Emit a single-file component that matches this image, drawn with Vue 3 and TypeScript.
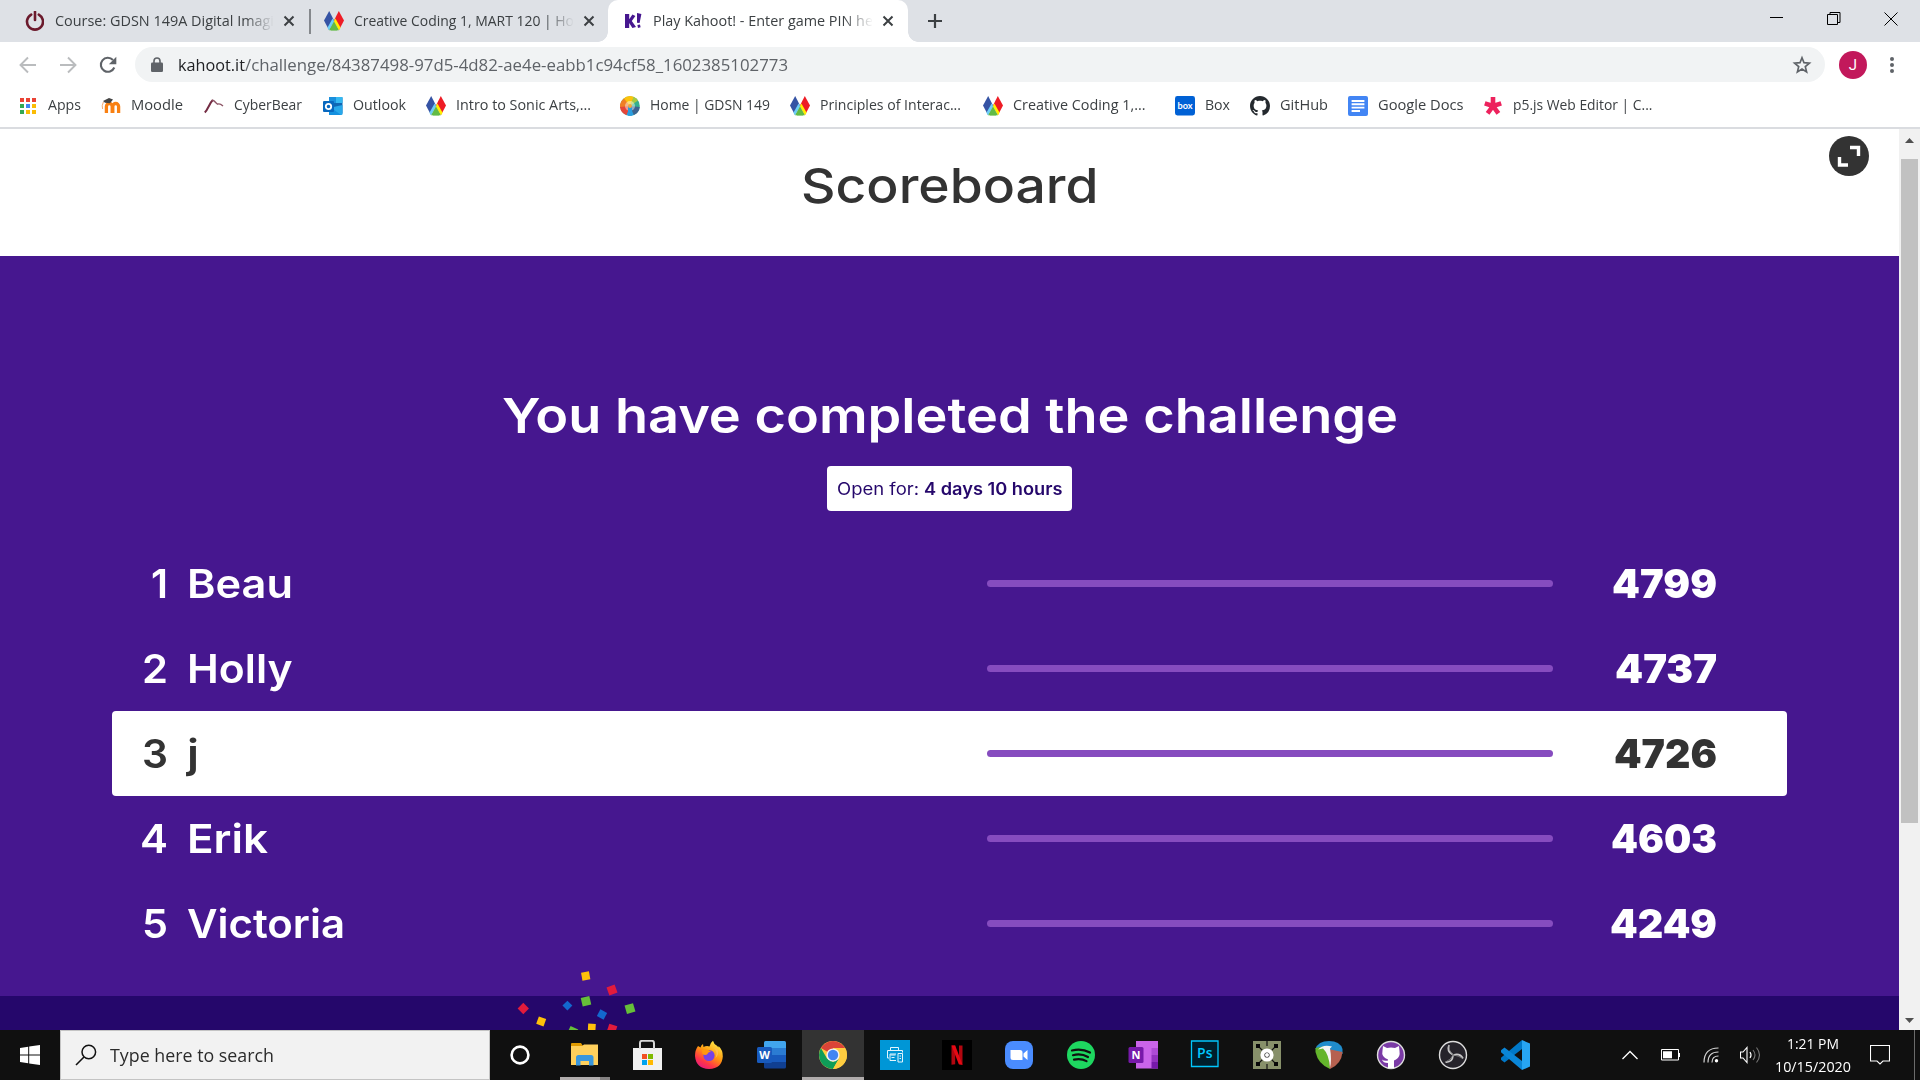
<script setup lang="ts">
import type { DirectiveBinding } from 'vue'

interface Tab { title: string; icon: string; width: number; active?: boolean }
interface Bookmark { label: string; icon: string; slot: number; text: number }
interface Player { rank: number; name: string; score: number; nameWidth: number; rankWidth: number; scoreWidth: number; me?: boolean }
interface Piece { x: number; y: number; s: number; r: number; c: string }
interface App { name: string; icon: string; state?: string }

// Scales a label horizontally so that it occupies the given width.
const vFit = (el: HTMLElement, binding: DirectiveBinding<number>) => {
  el.style.transform = ''
  el.style.marginRight = ''
  const natural = el.getBoundingClientRect().width
  el.style.transform = `scaleX(${binding.value / natural})`
  el.style.marginRight = `${binding.value - natural}px`
}

const octocat = 'M8 0C3.58 0 0 3.58 0 8c0 3.54 2.29 6.53 5.47 7.59.4.07.55-.17.55-.38 0-.19-.01-.82-.01-1.49-2.01.37-2.53-.49-2.69-.94-.09-.23-.48-.94-.82-1.13-.28-.15-.68-.52-.01-.53.63-.01 1.08.58 1.23.82.72 1.21 1.87.87 2.33.66.07-.52.28-.87.51-1.07-1.78-.2-3.64-.89-3.64-3.95 0-.87.31-1.59.82-2.15-.08-.2-.36-1.02.08-2.12 0 0 .67-.21 2.2.82.64-.18 1.32-.27 2-.27.68 0 1.36.09 2 .27 1.53-1.04 2.2-.82 2.2-.82.44 1.1.16 1.92.08 2.12.51.56.82 1.27.82 2.15 0 3.07-1.87 3.75-3.65 3.95.29.25.54.73.54 1.48 0 1.07-.01 1.93-.01 2.2 0 .21.15.46.55.38A8.013 8.013 0 0016 8c0-4.42-3.58-8-8-8z'

// 20x20 glyphs used in the tab strip and the bookmarks bar
const small: Record<string, string> = {
  power: '<path d="M7.2 3.6A8 8 0 1 0 14.8 3.6" fill="none" stroke="#6b1a2c" stroke-width="2.600" stroke-linecap="round"/><path d="M11 .8V9" stroke="#6b1a2c" stroke-width="2.600" stroke-linecap="round"/>',
  diamonds: '<path d="M5.2 0L10 9.6 5 19 0 9.6z" fill="#3553a4"/><path d="M14.8 0L20 9.6 15 19 10 9.6z" fill="#ee1c25"/><path d="M10 10l5 9.3H5z" fill="#62bb46"/><path d="M10 10L5 19.3l-1.6-2.6L8.6 7.4z" fill="#6ccff6"/><path d="M10 10l5 9.3 1.6-2.6-5.2-9.3z" fill="#fff200"/><path d="M10 13l3.4 6.5H6.6z" fill="#62bb46"/>',
  kahoot: '<path d="M1 3h4.2v5.2L8.400 3.6l3 1.4-3.600 5L12 16l-3.600 1-3.200-5v5H1z" fill="#46178f"/><path d="M13 2l4.400 1-1.800 9-2.600-.2zM13.400 14l2.600-.4.6 2.600-2.600.8z" fill="#46178f"/>',
  apps: '<path d="M2 2h4v4H2zM8 2h4v4H8zM14 2h4v4h-4z" fill="#ea4335"/><path d="M2 8h4v4H2z" fill="#34a853"/><path d="M8 8h4v4H8z" fill="#4285f4"/><path d="M14 8h4v4h-4z" fill="#fbbc04"/><path d="M2 14h4v4H2z" fill="#34a853"/><path d="M8 14h4v4H8zM14 14h4v4h-4z" fill="#fbbc04"/>',
  moodle: '<path d="M5.4 17V10.4a2.9 2.9 0 0 1 5.8 0V17M11.8 17V10.4a2.9 2.9 0 0 1 5.8 0V17" fill="none" stroke="#f98012" stroke-width="3.3"/><path d="M2 5l6-3 4 1.6-3 3.6-5-.4z" fill="#444"/><path d="M2.4 6q-2 4-.8 7" fill="none" stroke="#f0a873" stroke-width="1"/>',
  bear: '<path d="M.8 16.500C4 13.500 5.600 7 8.800 4" fill="none" stroke="#742c43" stroke-width="2"/><path d="M8.200 4.200c2.200-.4 3.400 3 5.400 4 1.400-.8 3.400 0 5.400 1.800" fill="none" stroke="#8d5566" stroke-width="1.400"/>',
  outlook: '<rect x="6" y="1" width="13.5" height="17" rx="1" fill="#0f67b4"/><path d="M6 1h7v6H6z" fill="#1a8fdc"/><path d="M13 1h6.5v6H13z" fill="#35b8f1"/><path d="M6 12l13.5-3v9a1 1 0 0 1-1 1H6z" fill="#28a8ea"/><path d="M6 10l12 9H6z" fill="#1490df"/><rect y="5" width="11" height="11" rx="1" fill="#0868bf"/><circle cx="5.5" cy="10.5" r="2.7" fill="none" stroke="#fff" stroke-width="1.8"/>',
  wheel: '<circle cx="10" cy="10" r="9.8" fill="#35b08e"/><path d="M10 10L3 3.2A9.8 9.8 0 0 1 14 1z" fill="#fdc30b"/><path d="M10 10L0 12A9.8 9.8 0 0 1 4 2.4z" fill="#f07e26"/><path d="M10 10L7 19.3A9.8 9.8 0 0 1 0 11z" fill="#e5463a"/><path d="M10 10l4 9a9.8 9.8 0 0 1-7.4 0z" fill="#2a9de0"/><path d="M10 10l9.8 1a9.8 9.8 0 0 1-6 8z" fill="#3d6390"/><path d="M10 10l3.6-9.2a9.8 9.8 0 0 1 4.4 3.6z" fill="#a7c942"/><circle cx="10" cy="10" r="5" fill="#fff" opacity=".45"/><path d="M8 10h4v9.400q-2 .6-4 0z" fill="#2a9de0"/><circle cx="10" cy="10" r="2" fill="#f3a83b"/>',
  box: '<rect width="20" height="19.4" rx="2.4" fill="#0061d5"/><text x="10" y="13" text-anchor="middle" font-family="Lato, sans-serif" font-weight="700" font-size="9.5" textLength="15" lengthAdjust="spacingAndGlyphs" fill="#fff">box</text>',
  github: `<path transform="scale(1.25)" fill="#24292e" d="${octocat}"/>`,
  docs: '<rect width="20" height="20" rx="2" fill="#4285f4"/><path d="M3.6 5h12.8M3.6 8.3h12.8M3.6 11.6h12.8M3.6 15h8.4" stroke="#fff" stroke-width="1.9"/>',
  star5: '<path d="M10 10V1M10 10l8.2-2.6M10 10l5.4 7.4M10 10l-5.4 7.4M10 10L1.8 7.4" stroke="#ed225d" stroke-width="4.6"/>',
}

// 30x30 glyphs used in the taskbar
const large: Record<string, string> = {
  cortana: '<circle cx="15" cy="15" r="8.4" fill="none" stroke="#fff" stroke-width="2.6"/>',
  explorer: '<path d="M1 4q0-1 1-1h9l2 3H1z" fill="#e09a00"/><path d="M1 6h11l2-1.500h14V25H1z" fill="#ffd05c"/><path d="M6 25.500V17.500Q6 15 8.500 15h12.500Q23.500 15 23.500 17.500v8h-4.500V21h-8.500v4.500z" fill="#3a97dd"/>',
  store: '<path d="M1 8h29v22H1z" fill="#f1f1f1"/><path d="M8 9V3q0-2.200 2.200-2.200h9.600q2.200 0 2.200 2.200v6" fill="none" stroke="#d8d8d8" stroke-width="2"/><path d="M10 14h5v5h-5z" fill="#f25022"/><path d="M16 14h5v5h-5z" fill="#7fba00"/><path d="M10 20h5v5h-5z" fill="#00a4ef"/><path d="M16 20h5v5h-5z" fill="#ffb900"/>',
  firefox: '<defs><linearGradient id="ff" x1=".8" y1="0" x2=".2" y2="1"><stop offset="0" stop-color="#fff44f"/><stop offset=".45" stop-color="#ff980e"/><stop offset=".75" stop-color="#ff3647"/><stop offset="1" stop-color="#e31587"/></linearGradient></defs><path d="M4 6l2.500 1.500Q7 5 9 4l.5 3q3-1.500 6-.5Q17 2 19 .8q.8 3.500 4 5l1.500 1.700V6Q29 10 28.800 16.500 28 28.500 15 29 2 28.500 1 16 1 10 4 6z" fill="url(#ff)"/><circle cx="15" cy="15.500" r="5.600" fill="#7542e5"/><path d="M8 10q4-2 9 1.500-3 .5-4 3-2 1-4.500-.5z" fill="#ff980e"/><path d="M20 8q4 4 1.500 10 4-4 2-9z" fill="#ffbd4f"/>',
  word: '<path d="M8 2.500q0-1.500 1.500-1.500H28.500Q30 1 30 2.500V8H8z" fill="#41a5ee"/><path d="M8 8h22v7H8z" fill="#2b7cd3"/><path d="M8 15h22v7H8z" fill="#185abd"/><path d="M8 22h22v5q0 1.500-1.500 1.500H9.500Q8 28.500 8 27z" fill="#103f91"/><rect x="1" y="7" width="15" height="16" rx="1.500" fill="#185abd"/><text x="8.500" y="19" text-anchor="middle" font-family="Open Sans, sans-serif" font-weight="700" font-size="11" fill="#fff">W</text>',
  chrome: '<circle cx="15" cy="15" r="14" fill="#ffcd40"/><path d="M15 15L2.900 8A14 14 0 0 1 27.100 8H15z" fill="#db4437"/><path d="M2.900 8A14 14 0 0 0 15 29l6-10.500L15 22 9 18.500z" fill="#0f9d58"/><path d="M15 8h12.100A14 14 0 0 1 15 29l6-10.500z" fill="#ffcd40"/><circle cx="15" cy="15" r="6.600" fill="#f1f1f1"/><circle cx="15" cy="15" r="5.200" fill="#4285f4"/>',
  printer: '<path d="M0 0h30v30H0z" fill="#0096d6"/><path d="M9 18H7.500v-7.500h15v2M10.500 10V7.500h8V10M10.500 15h5M16 14h-6v6.500h6M18 13.500h4.500v8.500H18zM19.500 16h1.500M19.500 18.500h1.500M11.500 17.500h3" fill="none" stroke="#e4f5fc" stroke-width="1"/>',
  netflix: '<path d="M0 0h30v30H0z" fill="#000"/><path d="M9.500 5.500h3.700v18.800l-3.700.4zM17 5.500h3.500v19.200l-3.500-.4z" fill="#b1060f"/><path d="M9.500 5.500h3.700l7.300 19.200-3.700-.4z" fill="#e50914"/>',
  zoom: '<rect x="1" y="1" width="28" height="28" rx="8" fill="#4a8cff"/><path d="M6.500 10h9.500q2.500 0 2.500 2.500V20H9q-2.500 0-2.500-2.500zM19.500 13.500l4-3.500v10l-4-3.500z" fill="#fff"/>',
  spotify: '<circle cx="15" cy="15" r="14" fill="#1ed760"/><path d="M6 10.500q9.500-2.500 18 2M7 15.200q8-2.200 15 1.800M8 19.600q7-1.600 12.500 1.500" fill="none" stroke="#101010" stroke-width="2.200" stroke-linecap="round"/>',
  onenote: '<path d="M8 1h22v27.500H8z" fill="#ca64ea"/><path d="M23.500 8H30v7h-6.500z" fill="#ae4bd5"/><path d="M23.500 15H30v7h-6.500z" fill="#9332bf"/><path d="M23.500 22H30v6.500h-6.500z" fill="#7719aa"/><rect x=".5" y="7" width="15" height="16" rx="1.500" fill="#7719aa"/><text x="8" y="19" text-anchor="middle" font-family="Open Sans, sans-serif" font-weight="700" font-size="11" fill="#fff">N</text>',
  photoshop: '<path d="M1.500 1h26.500v25.500H1.500z" fill="#001e2b" stroke="#00c8ff" stroke-width="1.300"/><text x="14.800" y="18" text-anchor="middle" font-family="Open Sans, sans-serif" font-weight="600" font-size="14" fill="#00c8ff">Ps</text>',
  processor: '<path d="M1 1h28v28H1z" fill="#87906a"/><path d="M5.500 5.500l19 19M24.500 5.500l-19 19M15 1v5M15 24v5" stroke="#151515" stroke-width="1.200"/><path d="M4 4h4v4H4zM22 4h4v4h-4zM4 22h4v4H4zM22 22h4v4h-4z" fill="#080808"/><circle cx="15" cy="15" r="4.600" fill="#222" stroke="#fff" stroke-width="4"/><circle cx="15" cy="15" r="2" fill="#fff"/>',
  reaper: '<path d="M1.500 9Q4 1 15 1t13.500 8v5H15z" fill="#208ccc"/><path d="M1.500 8l7.500-1.500q5 1.500 7 8.500v14Q4 24 1.500 12z" fill="#64b52c"/><path d="M14 9l14.500 3q-1 12-12.500 17z" fill="#b66150"/><path d="M4 9.500q5-5.500 14-3l-2 2q2 11 0 19.500-1-14-7-19.500z" fill="#f4f4f4"/>',
  desktop: '<circle cx="15" cy="15" r="13.500" fill="#7a3aa5" stroke="#ddd" stroke-width="1.400"/><path d="M7 6l4 2q4-1 8 0l4-2 .5 5q1 6-3.500 8.500l-2 1v7.500h-6v-5q-5 0-6-3.500 2 2 6 1v-1q-7-2.500-5.500-9z" fill="#fff"/>',
  obs: '<circle cx="15" cy="15" r="13.500" fill="#25232a" stroke="#ddd" stroke-width="1.400"/><path d="M11 5q-2.500 6.500 3.500 9.500M25 18.500Q22 13 15.500 15M7.500 22q7 .5 7.500-6.500" fill="none" stroke="#c8c8c8" stroke-width="1.700"/><path d="M11 5q-1 5 3.500 9.500M25 18.500q-5-3-9.500-3.500M7.500 22q5-2 7.500-6.500" fill="none" stroke="#8b8b8b" stroke-width=".8"/>',
  vscode: '<path d="M22 0v9L4.500 22.500 1 19.800v-2z" fill="#0078c8"/><path d="M22 30v-9L4.500 7.500 1 10.200v2z" fill="#0a86d8"/><path d="M22 0l8 3.500v23L22 30z" fill="#27a5f3"/>',
}

const tabs: Tab[] = [
  { title: 'Course: GDSN 149A Digital Imagi', icon: 'power', width: 219 },
  { title: 'Creative Coding 1, MART 120 | Ho', icon: 'diamonds', width: 220 },
  { title: 'Play Kahoot! - Enter game PIN he', icon: 'kahoot', width: 220, active: true },
]

const bookmarks: Bookmark[] = [
  { label: 'Apps', icon: 'apps', slot: 83, text: 33 },
  { label: 'Moodle', icon: 'moodle', slot: 103, text: 52 },
  { label: 'CyberBear', icon: 'bear', slot: 119, text: 68 },
  { label: 'Outlook', icon: 'outlook', slot: 103, text: 53 },
  { label: 'Intro to Sonic Arts,...', icon: 'diamonds', slot: 193.5, text: 135 },
  { label: 'Home | GDSN 149', icon: 'wheel', slot: 170.5, text: 120 },
  { label: 'Principles of Interac...', icon: 'diamonds', slot: 193, text: 141 },
  { label: 'Creative Coding 1,...', icon: 'diamonds', slot: 192, text: 132.5 },
  { label: 'Box', icon: 'box', slot: 75, text: 25 },
  { label: 'GitHub', icon: 'github', slot: 98, text: 48 },
  { label: 'Google Docs', icon: 'docs', slot: 135, text: 85.5 },
  { label: 'p5.js Web Editor | C...', icon: 'star5', slot: 175, text: 139.5 },
]

const players: Player[] = [
  { rank: 1, name: 'Beau', score: 4799, nameWidth: 106, rankWidth: 17, scoreWidth: 105 },
  { rank: 2, name: 'Holly', score: 4737, nameWidth: 105.5, rankWidth: 26, scoreWidth: 102 },
  { rank: 3, name: 'j', score: 4726, nameWidth: 12, rankWidth: 26, scoreWidth: 103, me: true },
  { rank: 4, name: 'Erik', score: 4603, nameWidth: 81, rankWidth: 28, scoreWidth: 106 },
  { rank: 5, name: 'Victoria', score: 4249, nameWidth: 158, rankWidth: 26, scoreWidth: 107 },
]

const confetti: Piece[] = [
  { x: 585.7, y: 976, s: 8, r: -10, c: '#ffc00a' },
  { x: 612, y: 990, s: 8.6, r: -20, c: '#e21b3c' },
  { x: 523.3, y: 1008.5, s: 8, r: 45, c: '#e21b3c' },
  { x: 567.4, y: 1005.6, s: 7, r: 45, c: '#1368ce' },
  { x: 586, y: 1001.2, s: 8.8, r: -13, c: '#66bf39' },
  { x: 630, y: 1008.6, s: 8.8, r: -16, c: '#66bf39' },
  { x: 602, y: 1014.5, s: 7.6, r: 28, c: '#1368ce' },
  { x: 541.2, y: 1021.4, s: 7.8, r: 20, c: '#ffc00a' },
  { x: 591.8, y: 1027.6, s: 7.6, r: 3, c: '#ffc00a' },
  { x: 612, y: 1029, s: 8.4, r: 18, c: '#e21b3c' },
  { x: 572.6, y: 1031.6, s: 8.4, r: 25, c: '#66bf39' },
]

const apps: App[] = [
  { name: 'Cortana', icon: 'cortana', state: 'cortana' },
  { name: 'File Explorer', icon: 'explorer', state: 'running' },
  { name: 'Microsoft Store', icon: 'store' },
  { name: 'Firefox', icon: 'firefox' },
  { name: 'Word', icon: 'word' },
  { name: 'Chrome', icon: 'chrome', state: 'focused' },
  { name: 'Printer', icon: 'printer' },
  { name: 'Netflix', icon: 'netflix' },
  { name: 'Zoom', icon: 'zoom' },
  { name: 'Spotify', icon: 'spotify' },
  { name: 'OneNote', icon: 'onenote' },
  { name: 'Photoshop', icon: 'photoshop' },
  { name: 'Processor', icon: 'processor' },
  { name: 'Reaper', icon: 'reaper' },
  { name: 'GitHub Desktop', icon: 'desktop' },
  { name: 'OBS', icon: 'obs' },
  { name: 'VS Code', icon: 'vscode' },
]
</script>

<template>
  <div class="screen">
    <header class="tabstrip">
      <div v-for="tab in tabs" :key="tab.title" class="tab" :class="{ active: tab.active }">
        <svg class="icon" width="20" height="20" viewBox="0 0 20 20" v-html="small[tab.icon]"></svg>
        <div class="title"><span v-fit="tab.width" class="fit">{{ tab.title }}</span></div>
        <svg class="close" width="12" height="12" viewBox="0 0 12 12"><path d="M1.500 1.500l9 9M10.500 1.500l-9 9" stroke="#3c4043" stroke-width="2" /></svg>
      </div>
      <svg class="newtab" width="16" height="16" viewBox="0 0 16 16"><path d="M8 1v14M1 8h14" stroke="#3c4043" stroke-width="2.200" /></svg>
      <div class="window">
        <svg width="14" height="14" viewBox="0 0 14 14"><path d="M0 5.500h13" stroke="#000" /></svg>
        <svg width="14" height="14" viewBox="0 0 14 14"><path d="M.5 2.500h10v10H.5zM3 2.500v-2h10v10h-2.500" fill="none" stroke="#000" /></svg>
        <svg width="14" height="14" viewBox="0 0 14 14"><path d="M.5.5l13 13M13.500.5l-13 13" stroke="#000" /></svg>
      </div>
    </header>

    <nav class="toolbar">
      <svg width="18" height="18" viewBox="0 0 18 18"><path d="M17 9H2M9 1.500L1.500 9 9 16.500" fill="none" stroke="#babcbe" stroke-width="1.900" /></svg>
      <svg width="18" height="18" viewBox="0 0 18 18"><path d="M1 9h15M9 1.500L16.500 9 9 16.500" fill="none" stroke="#babcbe" stroke-width="1.900" /></svg>
      <svg width="18" height="18" viewBox="0 0 18 18"><path d="M15.300 11.500A7 7 0 1 1 14 4" fill="none" stroke="#5f6368" stroke-width="2.100" /><path d="M17.300.8v7.400H9.900z" fill="#5f6368" /></svg>
      <div class="omnibox">
        <svg class="lock" width="12" height="16" viewBox="0 0 12 16"><rect y="5.500" width="12" height="9.500" rx="1.300" fill="#5f6368" /><path d="M3 6V4a3 3 0 0 1 6 0v2" fill="none" stroke="#5f6368" stroke-width="1.600" /></svg>
        <div class="url"><span v-fit="67" class="fit host">kahoot.it</span><span v-fit="543" class="fit">/challenge/84387498-97d5-4d82-ae4e-eabb1c94cf58_1602385102773</span></div>
        <svg class="star" width="20" height="20" viewBox="0 0 20 20"><path d="M10 2.700l2 5 5.400.4-4.100 3.500 1.300 5.300L10 14.100l-4.600 2.800 1.300-5.300L2.600 8.100 8 7.700z" fill="none" stroke="#5f6368" stroke-width="1.700" /></svg>
      </div>
      <div class="avatar">J</div>
      <svg class="menu" width="6" height="18" viewBox="0 0 6 18"><g fill="#5f6368"><circle cx="3" cy="3" r="2" /><circle cx="3" cy="9" r="2" /><circle cx="3" cy="15" r="2" /></g></svg>
    </nav>

    <div class="bookmarks">
      <div v-for="b in bookmarks" :key="b.label" class="bookmark" :style="{ width: b.slot + 'px' }">
        <svg class="icon" width="20" height="20" viewBox="0 0 20 20" v-html="small[b.icon]"></svg>
        <span v-fit="b.text" class="fit">{{ b.label }}</span>
      </div>
    </div>

    <div class="viewport">
      <main class="page">
        <div class="heading">
          <h1><span v-fit="297.500" class="fit">Scoreboard</span></h1>
          <button class="expand" aria-label="Fullscreen"><svg width="24" height="22" viewBox="0 0 24 22"><path d="M13 2.500h8.500V11M2.500 12v8H11" fill="none" stroke="#fff" stroke-width="3.400" /></svg></button>
        </div>
        <section class="board">
          <h2><span v-fit="896" class="fit">You have completed the challenge</span></h2>
          <div class="pill"><span v-fit="82" class="fit">Open for:</span><b v-fit="138.500" class="fit">4 days 10 hours</b></div>
          <div class="rows">
            <div v-for="p in players" :key="p.rank" class="row" :class="{ me: p.me }">
              <div class="rank"><span v-fit="p.rankWidth" class="fit">{{ p.rank }}</span></div>
              <div class="name"><span v-fit="p.nameWidth" class="fit">{{ p.name }}</span></div>
              <div class="bar"></div>
              <div class="score"><span v-fit="p.scoreWidth" class="fit">{{ p.score }}</span></div>
            </div>
          </div>
        </section>
        <div class="footer"></div>
      </main>
      <div class="scrollbar">
        <svg width="21" height="30" viewBox="0 0 21 30"><path d="M6 14l4.500-5 4.500 5z" fill="#505050" /></svg>
        <div class="thumb"></div>
        <svg width="21" height="21" viewBox="0 0 21 21"><path d="M6 9l4.500 5L15 9z" fill="#505050" /></svg>
      </div>
      <svg class="confetti" width="140" height="70" viewBox="510 960 140 70">
        <rect v-for="(c, i) in confetti" :key="i" :x="c.x - c.s / 2" :y="c.y - c.s / 2" :width="c.s" :height="c.s" :fill="c.c" :transform="`rotate(${c.r} ${c.x} ${c.y})`" />
      </svg>
    </div>

    <footer class="taskbar">
      <div class="start"><svg width="20" height="20" viewBox="0 0 20 20"><path d="M0 2.900l8.200-1.200v7.700H0zM9.200 1.500L20 0v9.400H9.200zM0 10.500h8.200v7.700L0 17.100zM9.200 10.500H20V20L9.200 18.400z" fill="#fff" /></svg></div>
      <div class="search">
        <svg width="22" height="22" viewBox="0 0 22 22"><circle cx="13.800" cy="8" r="6.800" fill="none" stroke="#111" stroke-width="1.500" /><path d="M9 13L1 21" stroke="#111" stroke-width="1.600" /></svg>
        <span v-fit="164" class="fit">Type here to search</span>
      </div>
      <div v-for="a in apps" :key="a.name" class="app" :class="a.state">
        <svg width="30" height="30" viewBox="0 0 30 30" v-html="large[a.icon]"></svg>
      </div>
      <div class="tray">
        <svg width="16" height="10" viewBox="0 0 16 10"><path d="M.5 9L8 1.500 15.500 9" fill="none" stroke="#fff" stroke-width="1.300" /></svg>
        <svg class="battery" width="19" height="12" viewBox="0 0 19 12"><path d="M.5.5h17v10.500H.5z" fill="none" stroke="#fff" /><path d="M2 2.200h9v7H2zM17.500 4H19v4h-1.500z" fill="#fff" /></svg>
        <svg class="wifi" width="16" height="16" viewBox="0 0 16 16"><g fill="none" stroke="#d5d5d5" stroke-width="1.200"><path d="M1 15.500Q1 1 15.500 1M5 15.500Q5 5 15.500 5M9 15.500Q9 9 15.500 9" /></g><circle cx="13.500" cy="13.700" r="1.700" fill="#fff" /></svg>
        <svg class="speaker" width="21" height="18" viewBox="0 0 21 18"><path d="M.5 6H3l4-4.500v15L3 12H.5z" fill="none" stroke="#fff" stroke-width="1.100" /><path d="M10 6q2 3 0 6" fill="none" stroke="#fff" stroke-width="1.200" /><path d="M13 4q4 5 0 10M16.500 1.500q6 7.500 0 15" fill="none" stroke="#777" stroke-width="1.100" /></svg>
        <div class="clock">
          <div><span v-fit="52" class="fit">1:21 PM</span></div>
          <div><span v-fit="76" class="fit">10/15/2020</span></div>
        </div>
        <svg class="notice" width="20" height="20" viewBox="0 0 20 20"><path d="M.5.5h19v15.500H13L10 19l-3-3H.5z" fill="none" stroke="#fff" stroke-width="1.100" /></svg>
        <div class="peek"></div>
      </div>
    </footer>
  </div>
</template>

<style>
body { margin: 0; overflow: hidden; }
</style>

<style scoped>
* { box-sizing: border-box; }
.screen { width: 1920px; height: 1080px; display: flex; flex-direction: column; background: #fff; overflow: hidden; font-family: "Open Sans", "Noto Sans", sans-serif; font-size: 14.500px; color: #3c4043; }
.screen svg { display: block; flex: none; }
.fit { display: inline-block; flex: none; white-space: nowrap; transform-origin: 0 50%; }

.tabstrip { height: 42px; flex: none; display: flex; align-items: center; background: #dee1e6; padding-left: 8px; }
.tab { position: relative; height: 42px; width: 300px; flex: none; display: flex; align-items: center; padding-left: 16px; }
.tab:first-child::after { content: ""; position: absolute; right: -3px; top: 9px; width: 2px; height: 25px; background: #85888c; }
.title { width: 219px; margin-left: 10px; padding-bottom: 2px; overflow: hidden; white-space: nowrap; mask-image: linear-gradient(90deg, #000 190px, transparent 220px); }
.tab:first-child .title { padding-left: 1px; }
.tab.active .title { margin-left: 9px; }
.close { margin-left: 10px; }
.tab.active { background: #fff; border-radius: 10px 10px 0 0; }
.tab.active::before, .tab.active::after { content: ""; position: absolute; bottom: 0; width: 10px; height: 10px; }
.tab.active::before { left: -10px; background: radial-gradient(circle at 0 0, transparent 9.500px, #fff 10px); }
.tab.active::after { right: -10px; background: radial-gradient(circle at 100% 0, transparent 9.500px, #fff 10px); }
.newtab { margin-left: 19px; }
.window { margin-left: auto; display: flex; gap: 43px; padding: 0 22px 5px 0; }

.toolbar { height: 45px; flex: none; display: flex; align-items: center; padding: 0 25px 0 19px; }
.toolbar > svg + svg { margin-left: 22px; }
.omnibox { width: 1690px; height: 35px; margin-left: 18px; flex: none; border-radius: 18px; background: #f1f3f4; display: flex; align-items: center; padding: 0 13px 0 16px; font-size: 17px; color: #5f6368; }
.url { display: flex; margin-left: 15px; padding-bottom: 1px; }
.host { color: #202124; }
.star { margin-left: auto; }
.avatar { width: 28px; height: 28px; margin-left: 14px; border-radius: 50%; background: #c2185b; color: #fff; font: 15px/28px Roboto, sans-serif; text-align: center; }
.menu { margin-left: auto; }

.bookmarks { height: 42px; flex: none; display: flex; align-items: center; padding: 0 0 2px 18px; border-bottom: 2px solid #dadce0; }
.bookmark { flex: none; display: flex; align-items: center; gap: 10px; }
.bookmark .fit { padding-bottom: 3px; }

.viewport { position: relative; height: 901px; flex: none; display: flex; }
.page { width: 1899px; display: flex; flex-direction: column; font-family: Inter, "Open Sans", sans-serif; }
.heading { position: relative; height: 127px; flex: none; display: flex; justify-content: center; }
h1, h2 { margin: 0; font-weight: 600; font-size: 48.500px; line-height: 60px; white-space: nowrap; }
h1 { margin-top: 27px; color: #333; font-weight: 500; }
.expand { position: absolute; top: 7px; left: 1829px; width: 40px; height: 40px; padding: 0; border: 0; border-radius: 50%; background: #333; display: flex; align-items: center; justify-content: center; }
.board { height: 740px; flex: none; background: #46178f; color: #fff; display: flex; flex-direction: column; align-items: center; }
h2 { margin-top: 130px; }
.pill { width: 245px; height: 45px; margin-top: 20px; border-radius: 4px; background: #fff; color: #25076b; font-size: 17px; display: flex; align-items: center; justify-content: center; gap: 5px; }
.pill b { font-weight: 600; }
.rows { width: 1675px; margin-top: 30px; }
.row { height: 85px; display: flex; align-items: center; border-radius: 4px; font-weight: 600; font-size: 40px; line-height: 85px; }
.row.me { background: #fff; color: #333; }
.rank { width: 56px; text-align: right; }
.name { width: 800px; margin-left: 19px; }
.bar { width: 566px; height: 7px; border-radius: 4px; background: #864cbf; }
.score { width: 164px; text-align: right; font-weight: 900; }
.footer { height: 34px; background: #25076b; }
.confetti { position: absolute; left: 510px; bottom: 0; }
.scrollbar { width: 21px; background: #f1f1f1; display: flex; flex-direction: column; }
.thumb { width: 17px; height: 664px; margin: 0 2px auto; background: #c1c1c1; }

.taskbar { height: 50px; flex: none; display: flex; align-items: stretch; background: #101010; }
.start { width: 60px; display: flex; align-items: center; justify-content: center; }
.search { width: 429.500px; display: flex; align-items: center; gap: 13px; padding-left: 14px; background: #f2f2f2; border: 1px solid #c4c4c4; color: #2b2b2b; font-size: 19px; }
.app { position: relative; width: 62px; flex: none; display: flex; align-items: center; justify-content: center; }
.cortana { width: 64px; padding-right: 3px; }
.running::after, .focused::after { content: ""; position: absolute; left: 6px; bottom: 0; width: 50px; height: 3px; background: linear-gradient(90deg, #b0acac 40px, #858282 40px); }
.focused { background: #333; }
.focused::after { left: 0; width: 100%; background: #b0acac; }
.tray { margin-left: auto; display: flex; align-items: center; color: #fff; }
.battery { margin-left: 23px; }
.wifi { margin-left: 23px; }
.speaker { margin-left: 21px; }
.clock { width: 76px; margin-left: 14px; text-align: center; font-size: 15px; line-height: 23px; }
.notice { margin-left: 19px; }
.peek { width: 1px; height: 50px; margin: 0 5px 0 24px; background: #6b6b6b; }
</style>
